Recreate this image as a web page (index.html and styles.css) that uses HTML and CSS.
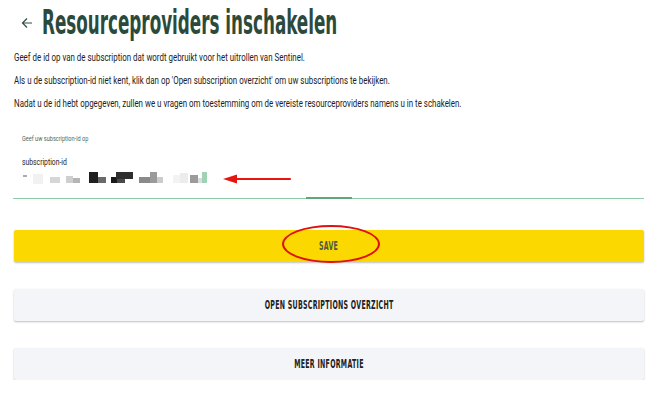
FILE: index.html
```html
<!DOCTYPE html>
<html lang="nl">
<head>
<meta charset="utf-8">
<link rel="stylesheet" href="styles.css">
</head>
<body>
<div class="page">
  <header class="head">
    <svg class="back" width="12" height="12" viewBox="0 0 12 12"><path d="M11 6H1.8M6 1.5L1.5 6L6 10.5" fill="none" stroke="#2f4f3f" stroke-width="1.2"/></svg>
    <h1 class="title"><span class="squeeze">Resourceproviders inschakelen</span></h1>
  </header>
  <p class="txt"><span class="sq">Geef de id op van de subscription dat wordt gebruikt voor het uitrollen van Sentinel.</span></p>
  <p class="txt"><span class="sq">Als u de subscription-id niet kent, klik dan op 'Open subscription overzicht' om uw subscriptions te bekijken.</span></p>
  <p class="txt"><span class="sq">Nadat u de id hebt opgegeven, zullen we u vragen om toestemming om de vereiste resourceproviders namens u in te schakelen.</span></p>

  <div class="field">
    <div class="hint"><span class="sq">Geef uw subscription-id op</span></div>
    <div class="label"><span class="sq">subscription-id</span></div>
    <div class="value">
      <svg width="200" height="14" viewBox="0 0 200 14">
        <rect x="1" y="3" width="4" height="2" fill="#aaa"/>
        <rect x="11" y="2" width="10" height="10" fill="#f1f1f1"/>
        <rect x="28" y="5" width="10" height="6" fill="#d6d6d6"/>
        <rect x="44" y="4" width="7" height="7" fill="#cfcfcf"/>
        <rect x="51" y="6" width="7" height="5" fill="#b5b5b5"/>
        <rect x="67" y="0" width="9" height="11" fill="#1f1f1f"/>
        <rect x="76" y="5" width="8" height="6" fill="#6a6a6a"/>
        <rect x="89" y="5" width="6" height="6" fill="#1a1a1a"/>
        <rect x="94" y="0" width="17" height="7" fill="#2e2e2e"/>
        <rect x="95" y="7" width="8" height="4" fill="#4a4a4a"/>
        <rect x="117" y="5" width="11" height="6" fill="#8a8a8a"/>
        <rect x="128" y="0" width="7" height="11" fill="#9a9a9a"/>
        <rect x="135" y="5" width="6" height="6" fill="#cccccc"/>
        <rect x="151" y="3" width="7" height="8" fill="#f3f3f3"/>
        <rect x="158" y="1" width="8" height="10" fill="#ececec"/>
        <rect x="168" y="3" width="8" height="8" fill="#9b9b9b"/>
        <rect x="176" y="6" width="4" height="5" fill="#dcdcdc"/>
        <rect x="180" y="0" width="5" height="11" fill="#9fd3b3"/>
      </svg>
      <svg class="arrow" width="72" height="12" viewBox="0 0 72 12"><path d="M14 6H68" stroke="#e8150f" stroke-width="2.2" stroke-linecap="round"/><path d="M1 6L15 1.5V10.5Z" fill="#e8150f"/></svg>
    </div>
    <div class="line"><div class="focus"></div></div>
  </div>

  <div class="actions">
    <button class="btn btn-save"><span class="btxt">SAVE</span><span class="ring"></span></button>
    <button class="btn btn-light"><span class="btxt">OPEN SUBSCRIPTIONS OVERZICHT</span></button>
    <button class="btn btn-light"><span class="btxt">MEER INFORMATIE</span></button>
  </div>
</div>
</body>
</html>
```
FILE: styles.css
```css
html, body { margin: 0; padding: 0; background: #fff; }
body { font-family: Roboto, "Noto Sans", sans-serif; color: #222; }
.page { padding: 0 26px 0 13px; }
.head { display: flex; align-items: center; height: 44px; padding-left: 8px; }
.back { margin-right: 9px; margin-top: 2px; }
.title { margin: 0; font-family: "Liberation Sans Narrow", "DejaVu Sans Condensed", sans-serif; font-weight: 700; font-size: 33px; color: #2c4a3b; white-space: nowrap; }
.squeeze { display: inline-block; transform: scaleX(0.565); transform-origin: left center; }
.txt { margin: 0; height: 23px; line-height: 23px; font-size: 11px; white-space: nowrap; color: #222; padding-left: 1px; }
.txt:first-of-type { margin-top: 2px; }
.sq { display: inline-block; transform: scaleX(0.72); transform-origin: left center; }
.field { margin-top: 18px; padding-left: 9px; }
.hint { font-size: 7px; color: #4d6a5a; height: 12px; line-height: 12px; }
.hint .sq, .label .sq { transform: scaleX(0.8); }
.label { margin-top: 11px; font-size: 8.5px; color: #222; height: 12px; line-height: 12px; }
.value { display: flex; align-items: center; height: 17px; margin-top: 2px; }
.arrow { margin-left: 0; }
.line { position: relative; height: 1px; background: #8ccca6; margin: 11px 0 0 -9px; }
.focus { position: absolute; left: 293px; width: 46px; top: -1px; height: 2px; background: #5fa67c; }
.actions { display: flex; flex-direction: column; gap: 27px; margin-top: 31px; padding-left: 1px; }
.btn { position: relative; display: block; width: 630px; height: 32px; border: none; border-radius: 2px; box-shadow: 0 1px 2px rgba(0,0,0,0.25); font-family: "Liberation Sans Narrow", "DejaVu Sans Condensed", sans-serif; font-weight: 700; font-size: 12px; letter-spacing: 0.5px; cursor: pointer; padding: 0; }
.btxt { display: inline-block; transform: scaleX(0.58); }
.btn-save { background: #fbd900; color: #4f5a45; }
.btn-light { background: #f4f5f8; color: #222; }
.ring { position: absolute; left: 268px; top: -5px; width: 94px; height: 34px; border: 2px solid #e01010; border-radius: 50%; }
```
